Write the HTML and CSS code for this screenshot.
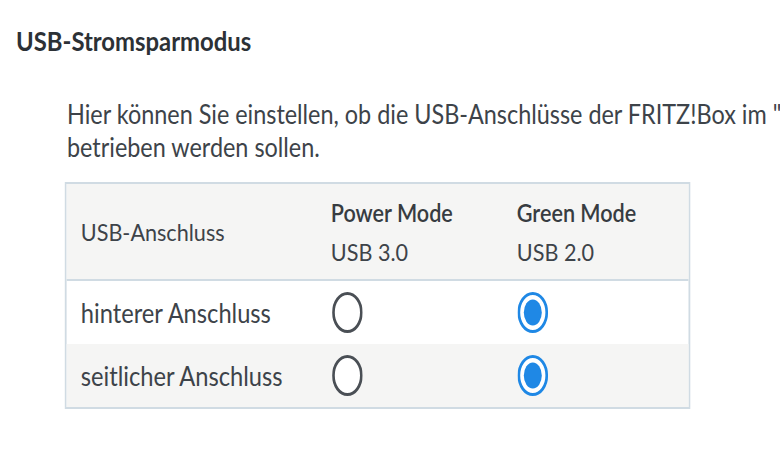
FILE: index.html
```html
<!DOCTYPE html>
<html lang="de">
<head>
<meta charset="utf-8">
<title>USB-Stromsparmodus</title>
<link rel="stylesheet" href="styles.css">
</head>
<body>
<div class="page">
  <h2 class="title">USB-Stromsparmodus</h2>
  <p class="intro">Hier können Sie einstellen, ob die USB-Anschlüsse der FRITZ!Box im "Power Mode" oder im "Green Mode" betrieben werden sollen.</p>
  <div class="usb-table">
    <div class="row head">
      <div class="cell label">USB-Anschluss</div>
      <div class="cell mode"><span class="mode-name">Power Mode</span><span class="mode-sub">USB 3.0</span></div>
      <div class="cell mode"><span class="mode-name">Green Mode</span><span class="mode-sub">USB 2.0</span></div>
    </div>
    <div class="row">
      <div class="cell label">hinterer Anschluss</div>
      <div class="cell">
        <svg class="radio" viewBox="0 0 34 41" aria-hidden="true"><ellipse class="ring off" cx="17" cy="20.5" rx="15.5" ry="19"/></svg>
      </div>
      <div class="cell">
        <svg class="radio" viewBox="0 0 34 41" aria-hidden="true"><ellipse class="ring on" cx="17" cy="20.5" rx="15.5" ry="19"/><ellipse class="dot" cx="17" cy="20.5" rx="10" ry="13"/></svg>
      </div>
    </div>
    <div class="row alt">
      <div class="cell label">seitlicher Anschluss</div>
      <div class="cell">
        <svg class="radio" viewBox="0 0 34 41" aria-hidden="true"><ellipse class="ring off" cx="17" cy="20.5" rx="15.5" ry="19"/></svg>
      </div>
      <div class="cell">
        <svg class="radio" viewBox="0 0 34 41" aria-hidden="true"><ellipse class="ring on" cx="17" cy="20.5" rx="15.5" ry="19"/><ellipse class="dot" cx="17" cy="20.5" rx="10" ry="13"/></svg>
      </div>
    </div>
  </div>
</div>
</body>
</html>
```

FILE: styles.css
```css
:root {
  --sx: 0.9;
}

html, body {
  margin: 0;
  padding: 0;
  background: #ffffff;
  overflow: hidden;
}

.page {
  width: calc(780px / var(--sx));
  height: 470px;
  box-sizing: border-box;
  padding-top: 26px;
  transform: scaleX(var(--sx));
  transform-origin: 0 0;
  font-family: Lato, "Open Sans", sans-serif;
  color: #3d4349;
}

.title {
  margin: 0 0 0 calc(16px / var(--sx));
  font-size: 26.5px;
  line-height: 31px;
  font-weight: 700;
  color: #2c3136;
}

.intro {
  margin: 41px 0 0 calc(67px / var(--sx));
  font-size: 26px;
  line-height: 33px;
  width: calc(1100px / var(--sx));
}

.usb-table {
  margin: 18px 0 0 calc(65px / var(--sx));
  width: calc(625px / var(--sx));
  border: 2px solid #d0dbe3;
  box-sizing: border-box;
}

.row {
  display: grid;
  grid-template-columns: calc(264px / var(--sx)) calc(186px / var(--sx)) 1fr;
  height: 63px;
  font-size: 24px;
}

.row.head {
  height: 95px;
  background: #f5f5f4;
  border-bottom: 2px solid #d0dbe3;
}

.row.alt {
  background: #f5f5f4;
}

.cell {
  display: flex;
  align-items: center;
}

.cell.label {
  padding-left: calc(14px / var(--sx));
}

.row:not(.head) .cell.label {
  font-size: 26.3px;
}

.cell.mode {
  flex-direction: column;
  align-items: flex-start;
  justify-content: center;
  line-height: 39px;
}

.mode-name {
  font-weight: 600;
  color: #373c41;
}

.radio {
  width: 34px;
  height: 41px;
  margin-left: calc(1px / var(--sx));
}

.ring {
  fill: #ffffff;
  stroke-width: 3;
}

.ring.off {
  stroke: #4a4f55;
}

.ring.on {
  stroke: #1f88e5;
}

.dot {
  fill: #1f88e5;
}
```
